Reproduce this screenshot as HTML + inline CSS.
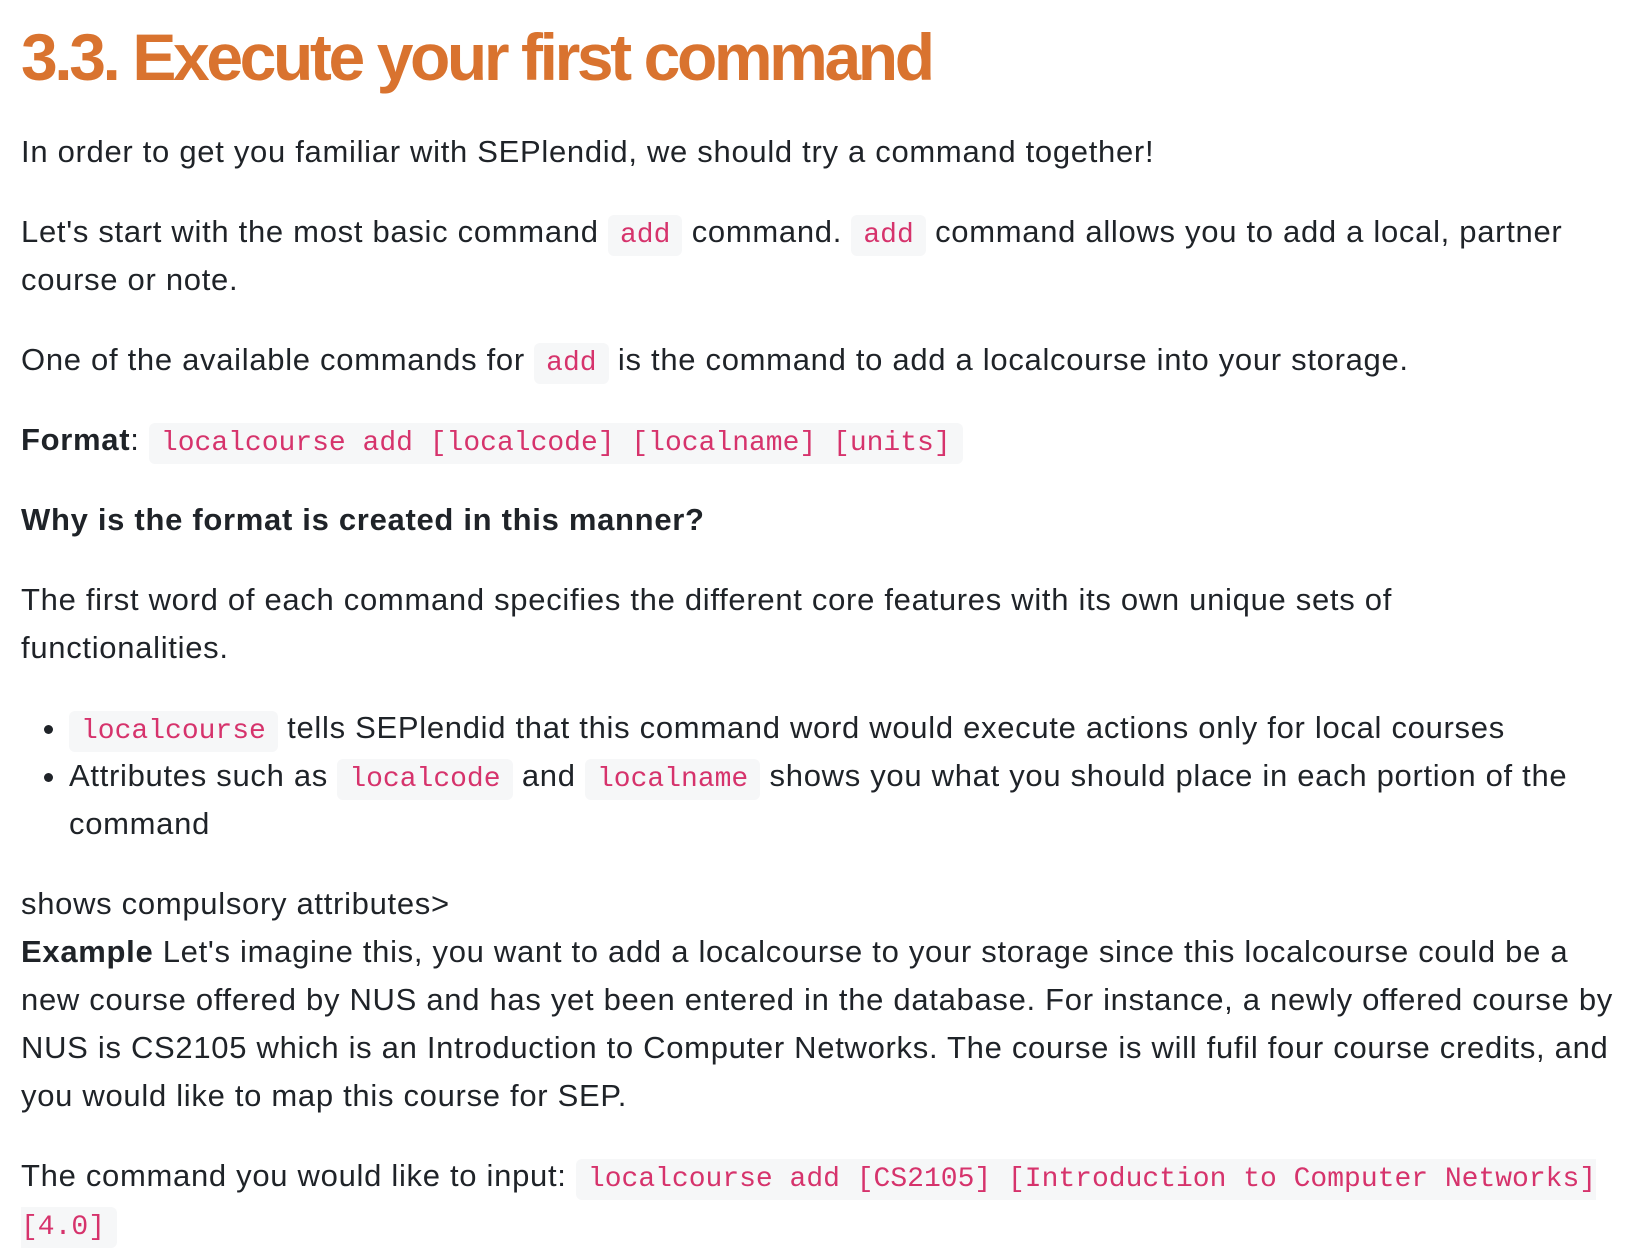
<!DOCTYPE html>
<html><head><meta charset="utf-8">
<style>
html,body{margin:0;padding:0;background:#fff;}
body{width:1632px;height:1248px;overflow:hidden;font-family:"Liberation Sans",Arial,sans-serif;color:#1f2328;font-size:31px;line-height:48px;letter-spacing:0.7px;}
.wrap{padding:16px 0 0 21px;width:1600px;}
h1{margin:0 0 30px 0;font-size:66px;line-height:82px;font-weight:700;color:#d9732f;letter-spacing:-3.4px;}
p{margin:0 0 32px 0;}
code{font-family:"Liberation Mono",monospace;font-size:28px;line-height:1;letter-spacing:0;color:#d6336c;background:#f6f7f8;padding:5px 12px;border-radius:6px;}
ul{margin:0 0 32px 0;padding-left:48px;}
li{margin:0;}
b{font-weight:700;}
</style></head><body><div class="wrap">
<h1>3.3. Execute your first command</h1>
<p>In order to get you familiar with SEPlendid, we should try a command together!</p>
<p>Let's start with the most basic command <code>add</code> command. <code>add</code> command allows you to add a local, partner course or note.</p>
<p>One of the available commands for <code>add</code> is the command to add a localcourse into your storage.</p>
<p><b>Format</b>: <code>localcourse add [localcode] [localname] [units]</code></p>
<p><b>Why is the format is created in this manner?</b></p>
<p>The first word of each command specifies the different core features with its own unique sets of<br>functionalities.</p>
<ul>
<li><code>localcourse</code> tells SEPlendid that this command word would execute actions only for local courses</li>
<li>Attributes such as <code>localcode</code> and <code>localname</code> shows you what you should place in each portion of the command</li>
</ul>
<p>shows compulsory attributes&gt;<br><b>Example</b> Let's imagine this, you want to add a localcourse to your storage since this localcourse could be a new course offered by NUS and has yet been entered in the database. For instance, a newly offered course by NUS is CS2105 which is an Introduction to Computer Networks. The course is will fufil four course credits, and you would like to map this course for SEP.</p>
<p>The command you would like to input: <code>localcourse add [CS2105] [Introduction to Computer Networks] [4.0]</code></p>
</div></body></html>
